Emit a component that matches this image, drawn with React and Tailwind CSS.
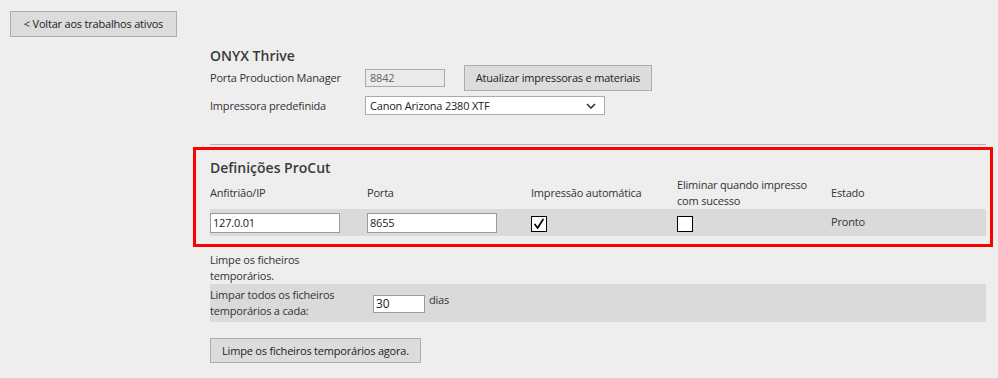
import React from "react";

function Check() {
  return (
    <div className="flex h-[16px] w-[16px] items-center justify-center border border-black bg-white">
      <svg width="12" height="12" viewBox="0 0 12 12">
        <path d="M2 6.5 L4.6 10 L10 1.5" fill="none" stroke="#000" strokeWidth="1.7" strokeLinecap="round" strokeLinejoin="round" />
      </svg>
    </div>
  );
}

export default function App() {
  return (
    <div className="min-h-[378px] bg-[#eeeeee] font-['Open_Sans',sans-serif] text-[11px] leading-[16px] tracking-[-0.2px] text-[#333333]">
      <div className="pl-[10px] pt-[11px]">
        <button className="h-[26px] w-[167px] border border-[#adadad] bg-[#dcdcdc] text-[11px] text-[#222]">
          &lt; Voltar aos trabalhos ativos
        </button>
      </div>

      <div className="pl-[210px] pt-[9px]">
        <div className="text-[14px] font-semibold leading-[20px] tracking-normal text-[#3a3a3a]">ONYX Thrive</div>
        <div className="mt-[-1px] flex h-[26px] items-center">
          <span className="w-[155px]">Porta Production Manager</span>
          <div className="flex h-[18px] w-[80px] items-center border border-[#ababab] bg-[#eaeaea] pl-[4px] text-[#666]">8842</div>
          <button className="ml-[19px] h-[26px] w-[188px] border border-[#adadad] bg-[#dcdcdc] text-[11px] text-[#222]">
            Atualizar impressoras e materiais
          </button>
        </div>
        <div className="mt-[5px] flex items-center">
          <span className="w-[155px]">Impressora predefinida</span>
          <div className="flex h-[19px] w-[240px] items-center justify-between border border-[#ababab] bg-white pl-[4px] pr-[8px] text-[#222]">
            <span>Canon Arizona 2380 XTF</span>
            <svg width="10" height="6" viewBox="0 0 10 6">
              <path d="M1 1 L5 5 L9 1" fill="none" stroke="#333" strokeWidth="1.6" />
            </svg>
          </div>
        </div>
        <div className="mt-[29px] h-px w-[776px] bg-[#b4b4b4]" />
      </div>

      <div className="ml-[193px] mt-[2px] w-[800px] border-[3px] border-[#ff0000] pb-[8px] pl-[14px] pr-[4px] pt-[8px]">
        <div className="text-[14px] font-semibold leading-[19px] tracking-normal text-[#3a3a3a]">Definições ProCut</div>
        <div className="grid h-[32px] grid-cols-[157px_164px_146px_154px_1fr] items-center">
          <span>Anfitrião/IP</span>
          <span>Porta</span>
          <span>Impressão automática</span>
          <span>
            Eliminar quando impresso
            <br />
            com sucesso
          </span>
          <span>Estado</span>
        </div>
        <div className="grid h-[27px] grid-cols-[157px_164px_146px_154px_1fr] items-center bg-[#dadada]">
          <div className="flex h-[20px] w-[130px] items-center border border-[#9a9a9a] bg-white pl-[2px] text-[#222]">127.0.01</div>
          <div className="flex h-[20px] w-[130px] items-center border border-[#9a9a9a] bg-white pl-[2px] text-[#222]">8655</div>
          <div className="pt-[3px]">
            <Check />
          </div>
          <div className="pt-[3px]">
            <div className="h-[16px] w-[16px] border border-black bg-white" />
          </div>
          <span className="pb-[2px]">Pronto</span>
        </div>
      </div>

      <div className="pl-[210px] pt-[5px]">
        <div>
          Limpe os ficheiros
          <br />
          temporários.
        </div>
        <div className="flex h-[38px] w-[776px] items-center bg-[#dadada]">
          <div className="w-[163px]">
            Limpar todos os ficheiros
            <br />
            temporários a cada:
          </div>
          <div className="mt-[2px] flex h-[18px] w-[52px] items-center border border-[#9a9a9a] bg-white pl-[2px] text-[12px] text-[#222]">30</div>
          <span className="ml-[4px] mb-[6px]">dias</span>
        </div>
        <button className="mt-[16px] h-[25px] w-[211px] border border-[#adadad] bg-[#dcdcdc] text-[11px] text-[#222]">
          Limpe os ficheiros temporários agora.
        </button>
      </div>
    </div>
  );
}
